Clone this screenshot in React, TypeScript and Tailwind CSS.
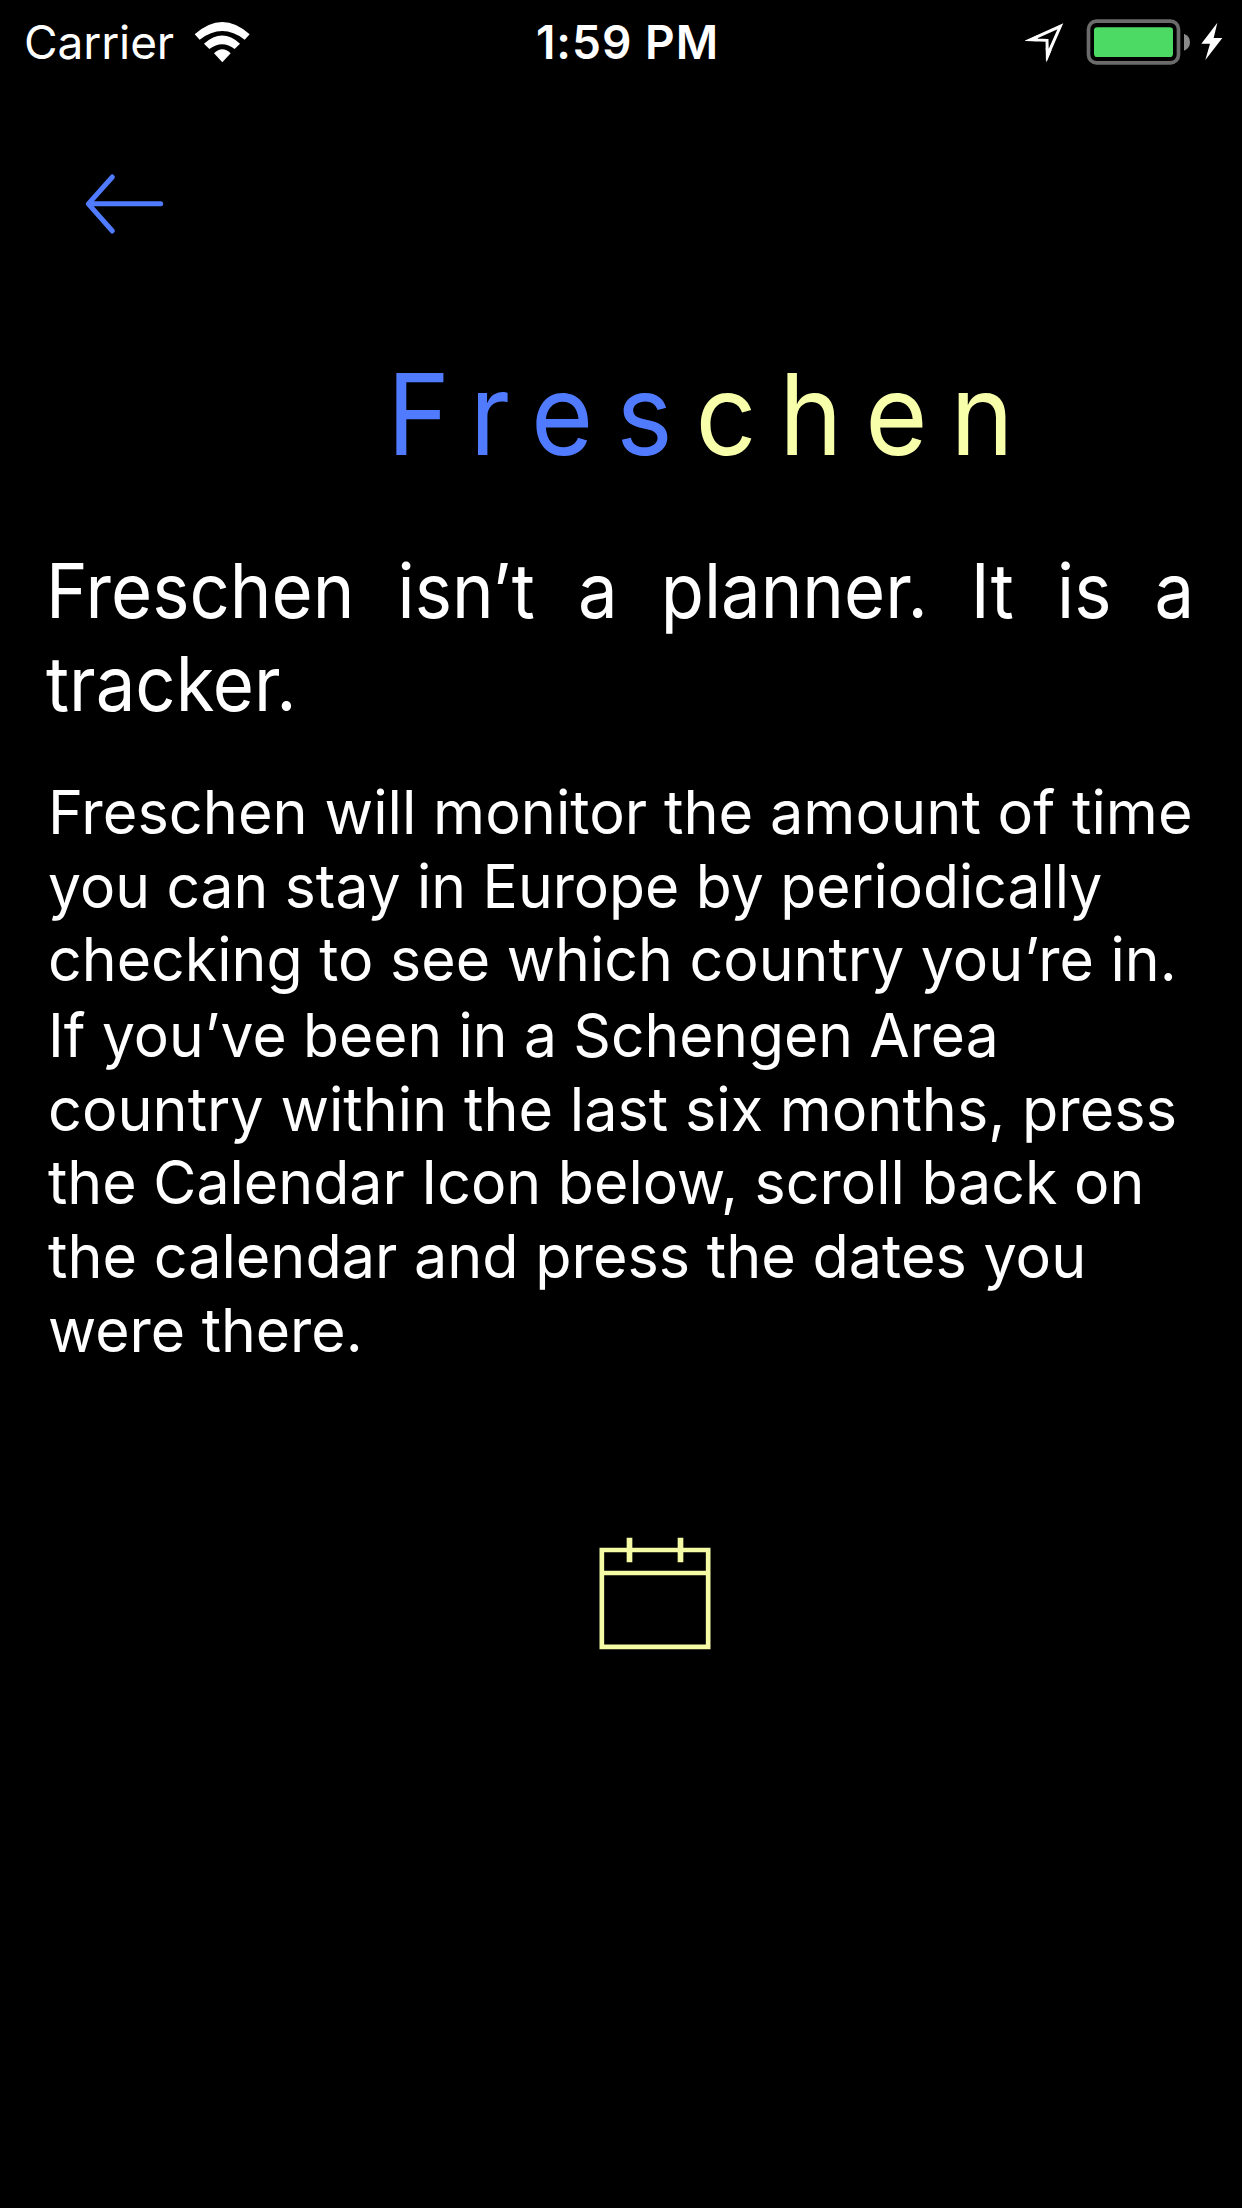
const lines: { text: string; stretch: number }[] = [
  { text: "Freschen will monitor the amount of time", stretch: 0.9748 },
  { text: "you can stay in Europe by periodically", stretch: 0.9636 },
  { text: "checking to see which country you’re in.", stretch: 0.9682 },
  { text: "If you’ve been in a Schengen Area", stretch: 0.9615 },
  { text: "country within the last six months, press", stretch: 0.973 },
  { text: "the Calendar Icon below, scroll back on", stretch: 0.968 },
  { text: "the calendar and press the dates you", stretch: 0.972 },
  { text: "were there.", stretch: 0.966 },
];

function WifiIcon() {
  return (
    <svg className="ml-[20px] h-[42px] w-[57px]" viewBox="585 60 171 126" fill="white">
      <path d="M587 100Q670 26 752 100L737 116Q670 64 602 116Z" />
      <path d="M615 128Q670 79 723 128L707 144Q670 116 631 144Z" />
      <path d="M645 157Q670 133 695 157L670 184Z" />
    </svg>
  );
}

function StatusIcons() {
  return (
    <svg className="h-[48px] w-[200px] justify-self-end" viewBox="75 54 600 144" fill="none">
      <path d="M92 119L181 79L142 167L141 121Z" stroke="white" strokeWidth="9" strokeMiterlimit="8" />
      <path d="M78 122L115 104L112 124Z M141 184L137 143L155 150Z" fill="white" />
      <rect x="265.500" y="63.500" width="270" height="125" rx="24" stroke="#6b6b6b" strokeWidth="11" />
      <rect x="282" y="82" width="237" height="89" rx="10" fill="#4cd964" />
      <path d="M552 101Q570 108 570 126.500T552 152Z" fill="#8a8a8a" />
      <path d="M652 68L604 131H630L616 180L667 114H641Z" fill="white" />
    </svg>
  );
}

function BackArrow() {
  return (
    <svg className="h-[110px] w-[140px]" viewBox="0 0 420 330" fill="none" stroke="#507bff" strokeWidth="15" strokeLinecap="round" strokeLinejoin="round">
      <path d="M302 161.500H86M157 81L85 161.500L157 243" />
    </svg>
  );
}

function CalendarIcon() {
  return (
    <svg className="h-[150px] w-[150px]" viewBox="0 0 450 450" fill="none" stroke="#f5fba5">
      <path d="M65.500 90H384.500V380.500H65.500ZM65.500 159H384.500" strokeWidth="14" />
      <path d="M148.500 53V127M301.500 53V127" strokeWidth="17" />
    </svg>
  );
}

export default function App() {
  return (
    <main className="h-[2208px] w-[1242px] overflow-hidden bg-black font-['Inter',sans-serif] text-white">
      <header className="grid h-[84px] grid-cols-[1fr_auto_1fr] items-center pl-[24px] pr-[17px] text-[46px] leading-none">
        <div className="flex items-center">
          <span className="tracking-[-0.1px]">Carrier</span>
          <WifiIcon />
        </div>
        <span className="pl-[6px] font-semibold tracking-[1px]">1:59 PM</span>
        <StatusIcons />
      </header>
      <nav className="mt-[66px] pl-[60px]">
        <button className="block" aria-label="Back"><BackArrow /></button>
      </nav>
      <h1 className="ml-[387px] mt-[98px] w-[720px] origin-left scale-x-[0.945] whitespace-nowrap text-[113px] leading-none tracking-[24.2px]">
        <span className="text-[#507bff]">Fres</span>
        <span className="text-[#f8ffab]">chen</span>
      </h1>
      <p className="ml-[46px] mt-[73px] w-[1236px] origin-left scale-x-[0.929] text-justify text-[76px] leading-[93px]">
        Freschen isn’t a planner. It is a tracker.
      </p>
      <div className="ml-[48px] mt-[46px] text-[61px] leading-[73.67px]">
        {lines.map(({ text, stretch }, i) => (
          <p
            key={text}
            className={i === 3 ? "mt-[2px] origin-left whitespace-nowrap" : "origin-left whitespace-nowrap"}
            style={{ transform: `scaleX(${stretch})` }}
          >
            {text}
          </p>
        ))}
      </div>
      <div className="mt-[153px] pl-[580px]">
        <button className="block" aria-label="Open calendar"><CalendarIcon /></button>
      </div>
    </main>
  );
}
